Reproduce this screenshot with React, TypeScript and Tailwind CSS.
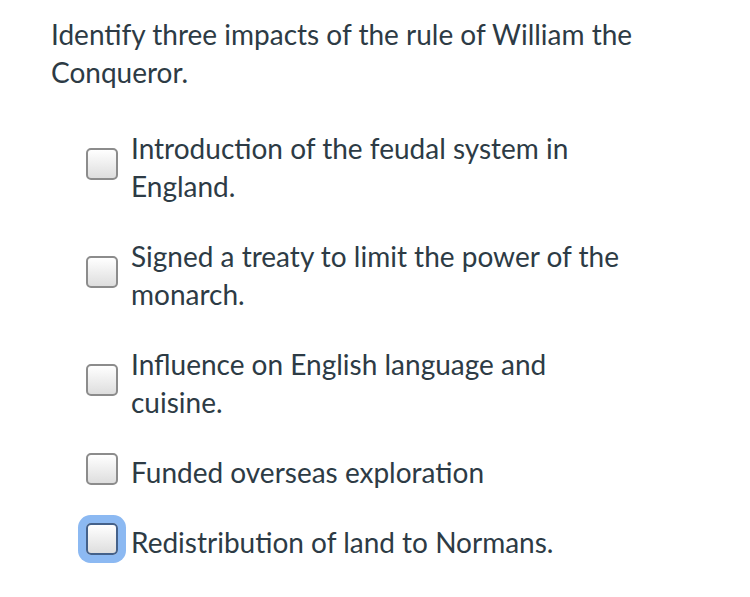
import React from "react"

const answers = [
  "Introduction of the feudal system in England.",
  "Signed a treaty to limit the power of the monarch.",
  "Influence on English language and cuisine.",
  "Funded overseas exploration",
  "Redistribution of land to Normans.",
]

function Box({ focused }: { focused?: boolean }) {
  return (
    <div
      className={
        focused
          ? "mb-[6px] h-[32px] w-[32px] shrink-0 rounded-[5px] border-2 border-[#44618a] bg-gradient-to-b from-white to-[#dedede] ring-8 ring-[#8cb9f2]"
          : "mb-[6px] h-[32px] w-[32px] shrink-0 rounded-[5px] border-2 border-[#8c8c8c] bg-gradient-to-b from-white to-[#dedede]"
      }
    />
  )
}

export default function App() {
  return (
    <div className="min-h-[597px] w-[750px] bg-white pl-[51px] pt-[15px] text-[#2d3b45] font-['Lato',sans-serif]">
      <p className="w-[600px] text-[28px] leading-[38px]">
        Identify three impacts of the rule of William the Conqueror.
      </p>
      <div className="mt-[38px] flex flex-col gap-[32px] pl-[35px]">
        {answers.map((a, i) => (
          <div key={i} className="flex items-center gap-[13px]">
            <Box focused={i === 4} />
            <span className="w-[495px] text-[28px] leading-[38px]">{a}</span>
          </div>
        ))}
      </div>
    </div>
  )
}
